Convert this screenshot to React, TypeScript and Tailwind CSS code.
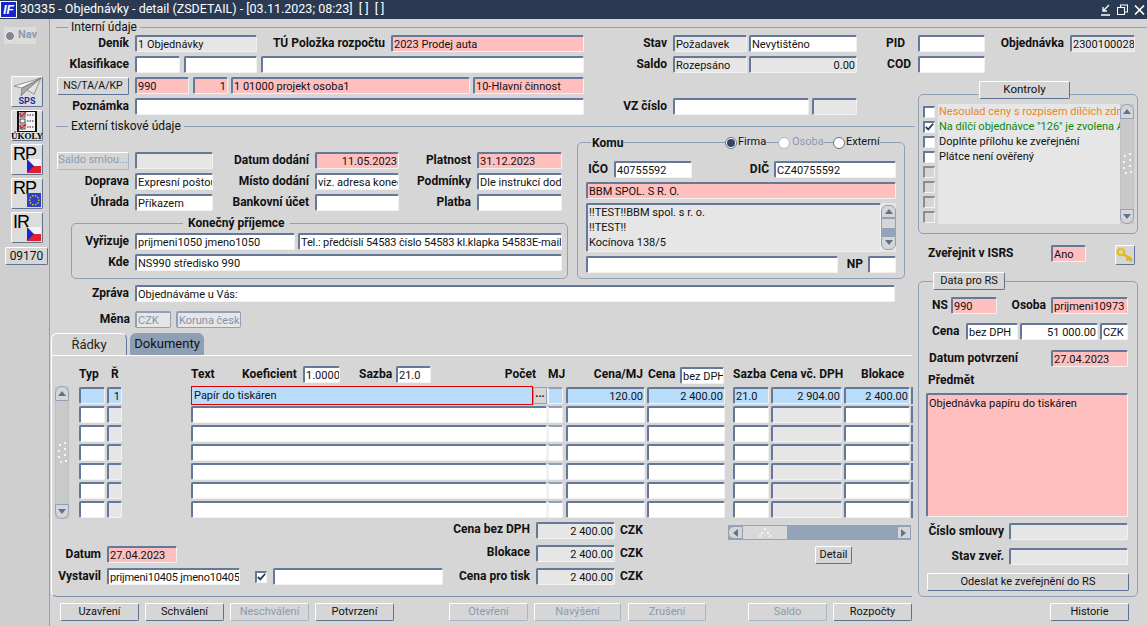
import type { ReactNode } from "react";

type Tone = "white" | "pink" | "gray" | "blue" | "off";

const TONES: Record<Tone, string> = {
  white: "bg-white",
  pink: "bg-[#ffbfbf]",
  gray: "bg-[#e6e6e6]",
  blue: "bg-[#b9dcfb]",
  off: "bg-[#e6e6e6] text-[#8194ad]",
};

function F({ c = "", t = "white", right, children }: { c?: string; t?: Tone; right?: boolean; children?: ReactNode }) {
  return (
    <div
      className={`h-[17px] shrink-0 overflow-hidden whitespace-nowrap rounded-[2px] border-t-2 border-l-2 border-r border-b border-t-[#64789a] border-l-[#64789a] border-r-[#f2f2f2] border-b-[#f2f2f2] px-[1px] leading-[15px] ${TONES[t]} ${right ? "text-right" : ""} ${c}`}
    >
      {children}
    </div>
  );
}

function Lbl({ c = "", left, children }: { c?: string; left?: boolean; children: ReactNode }) {
  return <div className={`shrink-0 whitespace-nowrap text-[12px] font-bold leading-[15px] text-[#111] ${left ? "text-left" : "text-right"} ${c}`}>{children}</div>;
}

function Btn({ c = "", off, children }: { c?: string; off?: boolean; children: ReactNode }) {
  return (
    <div
      className={`flex h-[18px] shrink-0 items-center justify-center whitespace-nowrap rounded-[2px] border border-t-white border-l-white bg-[#d6d6d6] ${off ? "border-r-[#a9b5c6] border-b-[#a9b5c6] text-[#8a9bb3]" : "border-r-[#5f7391] border-b-[#5f7391] text-[#111]"} ${c}`}
    >
      {children}
    </div>
  );
}

function Row({ c = "", children }: { c?: string; children: ReactNode }) {
  return <div className={`flex h-[17px] items-center ${c}`}>{children}</div>;
}

function Arrow({ dir }: { dir: "up" | "down" | "left" | "right" }) {
  const pts = { up: "4,1 8,6 0,6", down: "0,1 8,1 4,6", left: "6,0 6,8 1,4", right: "1,0 1,8 6,4" }[dir];
  return (
    <svg width="8" height="8" viewBox="0 0 8 8">
      <polygon points={pts} fill="#5f7391" />
    </svg>
  );
}

function Grip() {
  return (
    <svg width="10" height="22" viewBox="0 0 10 22">
      {[[2, 2], [7, 0], [1, 8], [7, 6], [1, 14], [7, 12], [3, 19], [8, 18]].map(([x, y]) => (
        <rect key={`${x}-${y}`} x={x} y={y} width="2" height="2" fill="#f4f4f4" />
      ))}
    </svg>
  );
}

function VScroll({ c = "" }: { c?: string }) {
  return (
    <div className={`flex w-[14px] shrink-0 flex-col bg-[#c9c9c9] ${c}`}>
      <div className="flex h-[15px] items-center justify-center rounded-t-[7px] border border-[#8fa0b8] bg-[#d6d6d6]">
        <Arrow dir="up" />
      </div>
      <div className="flex flex-1 items-center justify-center border-x border-[#c0c0c0]">
        <Grip />
      </div>
      <div className="flex h-[15px] items-center justify-center rounded-b-[7px] border border-[#8fa0b8] bg-[#d6d6d6]">
        <Arrow dir="down" />
      </div>
    </div>
  );
}

function Radio({ on, off }: { on?: boolean; off?: boolean }) {
  return (
    <div className={`flex h-[12px] w-[12px] shrink-0 items-center justify-center rounded-full border bg-white ${off ? "border-[#a9b5c6]" : "border-[#5f7391]"}`}>
      {on && <div className="h-[8px] w-[8px] rounded-full bg-[#334660]" />}
    </div>
  );
}

function Check({ on, off, c = "" }: { on?: boolean; off?: boolean; c?: string }) {
  return (
    <div
      className={`flex h-[12px] w-[12px] shrink-0 items-center justify-center border-t-2 border-l-2 border-r border-b border-r-[#f2f2f2] border-b-[#f2f2f2] ${off ? "border-t-[#8d8d8d] border-l-[#8d8d8d] bg-[#d6d6d6]" : "border-t-[#64789a] border-l-[#64789a] bg-white"} ${c}`}
    >
      {on && (
        <svg width="11" height="10" viewBox="0 0 11 10">
          <path d="M1 5l3 3 6-7" fill="none" stroke="#2a3a52" strokeWidth="2.2" />
        </svg>
      )}
    </div>
  );
}

function Flag({ eu }: { eu?: boolean }) {
  if (eu) {
    const stars = Array.from({ length: 10 }, (_, i) => {
      const a = (i * Math.PI) / 5;
      return <rect key={i} x={6.5 + 4.6 * Math.cos(a)} y={6.5 + 4.6 * Math.sin(a)} width="1.4" height="1.4" fill="#f5d800" />;
    });
    return (
      <svg width="14" height="14" viewBox="0 0 14 14">
        <rect width="14" height="14" fill="#2d3fc4" />
        {stars}
      </svg>
    );
  }
  return (
    <svg width="14" height="14" viewBox="0 0 14 14">
      <rect width="14" height="7" fill="#f4f4f4" />
      <rect y="7" width="14" height="7" fill="#e0202a" />
      <polygon points="0,0 7,7 0,14" fill="#2323c8" />
    </svg>
  );
}

function RailFlag({ text, eu }: { text: string; eu?: boolean }) {
  return (
    <div className="relative ml-[11px] mt-[3px] h-[31px] w-[32px] rounded-[2px] border border-t-white border-l-white border-r-[#5f7391] border-b-[#5f7391] bg-[#dcdcdc]">
      <div className="pl-[1px] font-['Liberation_Sans',sans-serif] text-[18px] leading-[18px] tracking-[-1px] text-black">{text}</div>
      <div className="absolute bottom-[1px] right-[1px] flex">
        <Flag eu={eu} />
      </div>
    </div>
  );
}

function Rail() {
  return (
    <div className="w-[50px] shrink-0 border-r border-[#8fa0b8] bg-[#cfcfcf]">
      <div className="ml-[4px] mt-[8px] flex h-[17px] w-[32px] items-center gap-[3px] bg-[#dcdcdc] pl-[1px] text-[11px] font-bold text-[#8a9bb3]">
        <div className="h-[10px] w-[10px] shrink-0 rounded-full border border-[#f2f2f2] bg-[#7f868f]" />
        Nav
      </div>
      <div className="ml-[11px] mt-[32px] flex h-[31px] w-[32px] flex-col items-center rounded-[2px] border border-t-white border-l-white border-r-[#5f7391] border-b-[#5f7391] bg-[#dcdcdc]">
        <svg width="30" height="20" viewBox="0 0 30 20">
          <polygon points="29,1 2,9 10,11" fill="#f8f8f8" stroke="#707070" strokeWidth="0.7" />
          <polygon points="29,1 10,11 9,19 15,13" fill="#a9a9a9" stroke="#707070" strokeWidth="0.7" />
          <polygon points="29,1 15,13 22,17" fill="#e4e4e4" stroke="#707070" strokeWidth="0.7" />
        </svg>
        <div className="text-[9px] font-bold leading-[8px] text-[#1b2f9e]">SPS</div>
      </div>
      <div className="ml-[11px] mt-[3px] flex h-[31px] w-[32px] flex-col items-center rounded-[2px] border border-t-white border-l-white border-r-[#5f7391] border-b-[#5f7391] bg-[#dcdcdc]">
        <svg width="22" height="21" viewBox="0 0 22 21">
          <rect x="1" y="0" width="20" height="21" fill="#111" />
          <rect x="3" y="1" width="16" height="19" fill="#f4f4f4" />
          {[2, 8, 14].map((y) => (
            <g key={y}>
              <rect x="4" y={y} width="5" height="4" fill="#f4f4f4" stroke="#222" strokeWidth="0.8" />
              <path d={`M11 ${y + 2}h7`} stroke="#222" strokeWidth="1" strokeDasharray="1.5 1" />
            </g>
          ))}
          <path d="M4 3l2 2 4-4M4 15l2 2 4-4" fill="none" stroke="#d5121a" strokeWidth="1.3" />
        </svg>
        <div className="font-['Liberation_Serif',serif] text-[9px] font-bold leading-[8px] text-black">ÚKOLY</div>
      </div>
      <RailFlag text="RP" />
      <RailFlag text="RP" eu />
      <RailFlag text="IR" />
      <Btn c="ml-[5px] mt-[4px] w-[43px] text-[12px]">09170</Btn>
    </div>
  );
}

function TitleBar() {
  return (
    <div className="flex h-[19px] items-center bg-[#2a3a52] text-[12.5px] text-white">
      <div className="flex h-[17px] w-[17px] items-center justify-center border border-white bg-[#1726c9] font-['Liberation_Sans',sans-serif] text-[12px] font-bold italic leading-none">IF</div>
      <div className="ml-[3px] whitespace-pre">30335 - Objednávky - detail (ZSDETAIL) - [03.11.2023; 08:23]  [ ]  [ ]</div>
      <div className="ml-auto mr-[2px] flex items-center gap-[6px]">
        <svg width="11" height="12" viewBox="0 0 11 12">
          <path d="M1 11h9M9 1L3 7M3 3v4h4" fill="none" stroke="#fff" strokeWidth="1.3" />
        </svg>
        <svg width="11" height="12" viewBox="0 0 11 12">
          <path d="M3.5 3V1h7v7H8M.5 3.5h7v7h-7z" fill="none" stroke="#fff" strokeWidth="1.1" />
        </svg>
        <svg width="11" height="12" viewBox="0 0 11 12">
          <path d="M1 1.5l9 9M10 1.5l-9 9" fill="none" stroke="#fff" strokeWidth="1.7" />
        </svg>
      </div>
    </div>
  );
}

function TopFields() {
  return (
    <>
      <Row>
        <Lbl c="w-[79px]">Deník</Lbl>
        <F c="ml-[6px] w-[122px]" t="gray">1 Objednávky</F>
        <Lbl c="w-[128px]">TÚ Položka rozpočtu</Lbl>
        <F c="ml-[6px] w-[193px]" t="pink">2023 Prodej auta</F>
        <Lbl c="w-[83px]">Stav</Lbl>
        <F c="ml-[6px] w-[74px]" t="gray">Požadavek</F>
        <F c="ml-[2px] w-[108px]">Nevytištěno</F>
        <Lbl c="w-[48px]">PID</Lbl>
        <F c="ml-[13px] w-[67px]" />
        <Lbl c="w-[79px]">Objednávka</Lbl>
        <F c="ml-[6px] w-[65px]" t="gray">2300100028</F>
      </Row>
      <Row c="mt-[4px]">
        <Lbl c="w-[79px]">Klasifikace</Lbl>
        <F c="ml-[6px] w-[45px]" />
        <F c="ml-[4px] w-[73px]" />
        <F c="ml-[4px] w-[323px]" />
        <Lbl c="w-[83px]">Saldo</Lbl>
        <F c="ml-[6px] w-[74px]" t="gray">Rozepsáno</F>
        <F c="ml-[2px] w-[108px]" t="gray" right>0.00</F>
        <Lbl c="w-[54px]">COD</Lbl>
        <F c="ml-[7px] w-[67px]" />
      </Row>
    </>
  );
}

function Komu() {
  return (
    <div className="relative ml-[9px] h-[137px] w-[328px] rounded-[5px] border border-[#8fa0b8] pt-[18px]">
      <div className="absolute -top-[8px] left-[13px] flex h-[15px] items-center">
        <div className="w-[32px] bg-[#d6d6d6] pl-[1px] text-[12px] font-bold">Komu</div>
        <div className="ml-[102px] flex w-[39px] items-center gap-[1px] bg-[#d6d6d6]"><Radio on /><span>Firma</span></div>
        <div className="ml-[14px] flex w-[46px] items-center gap-[2px] bg-[#d6d6d6] text-[#8a9bb3]"><Radio off /><span>Osoba</span></div>
        <div className="ml-[9px] flex w-[47px] items-center gap-[1px] bg-[#d6d6d6]"><Radio /><span>Externí</span></div>
      </div>
      <Row>
        <Lbl c="w-[30px]">IČO</Lbl>
        <F c="ml-[6px] w-[78px]">40755592</F>
        <Lbl c="w-[77px]">DIČ</Lbl>
        <F c="ml-[5px] w-[122px]">CZ40755592</F>
      </Row>
      <F c="ml-[8px] mt-[4px] w-[310px]" t="pink">BBM SPOL. S R. O.</F>
      <div className="ml-[8px] mt-[4px] flex h-[49px] w-[310px]">
        <div className="w-[295px] rounded-[2px] border-t-2 border-l-2 border-r border-b border-t-[#64789a] border-l-[#64789a] border-r-[#f2f2f2] border-b-[#f2f2f2] bg-[#e6e6e6] px-[1px] leading-[15px]">
          <div>‼TEST‼BBM spol. s r. o.</div>
          <div>‼TEST‼</div>
          <div>Kocínova 138/5</div>
        </div>
        <div className="flex w-[15px] flex-col bg-[#e6e6e6] pt-[2px]">
          <div className="flex h-[13px] items-center justify-center rounded-t-[6px] border border-[#8fa0b8] bg-[#d6d6d6]"><Arrow dir="up" /></div>
          <div className="h-[11px] border border-[#8fa0b8] bg-[#d6d6d6]" />
          <div className="h-[7px] bg-[#93a3b8]" />
          <div className="flex h-[14px] items-center justify-center rounded-b-[6px] border border-[#8fa0b8] bg-[#d6d6d6]"><Arrow dir="down" /></div>
        </div>
      </div>
      <Row c="mt-[4px]">
        <F c="ml-[8px] w-[252px]" />
        <Lbl c="w-[25px]">NP</Lbl>
        <F c="ml-[5px] w-[28px]" />
      </Row>
    </div>
  );
}

function Externi() {
  return (
    <div className="mt-[11px] flex">
      <div className="w-[518px] pt-[10px]">
        <Row>
          <Btn c="ml-[7px] h-[17px] w-[72px] text-[11px]" off>Saldo smlou...</Btn>
          <F c="ml-[6px] w-[78px]" t="gray" />
          <Lbl c="w-[96px]">Datum dodání</Lbl>
          <F c="ml-[6px] w-[84px]" t="pink" right>11.05.2023</F>
          <Lbl c="w-[72px]">Platnost</Lbl>
          <F c="ml-[6px] w-[85px]" t="pink">31.12.2023</F>
        </Row>
        <Row c="mt-[4px]">
          <Lbl c="w-[79px]">Doprava</Lbl>
          <F c="ml-[6px] w-[78px]">Expresní poštou</F>
          <Lbl c="w-[96px]">Místo dodání</Lbl>
          <F c="ml-[6px] w-[84px]">viz. adresa konečného</F>
          <Lbl c="w-[72px]">Podmínky</Lbl>
          <F c="ml-[6px] w-[85px]">Dle instrukcí dodavatele</F>
        </Row>
        <Row c="mt-[4px]">
          <Lbl c="w-[79px]">Úhrada</Lbl>
          <F c="ml-[6px] w-[78px]">Příkazem</F>
          <Lbl c="w-[96px]">Bankovní účet</Lbl>
          <F c="ml-[6px] w-[84px]" />
          <Lbl c="w-[72px]">Platba</Lbl>
          <F c="ml-[6px] w-[85px]" />
        </Row>
        <div className="relative ml-[21px] mt-[12px] h-[56px] w-[497px] rounded-[5px] border border-[#8fa0b8] pt-[9px]">
          <div className="absolute -top-[8px] left-[111px] bg-[#d6d6d6] px-[5px] text-[12px] font-bold leading-[15px]">Konečný příjemce</div>
          <Row>
            <Lbl c="w-[57px]">Vyřizuje</Lbl>
            <F c="ml-[6px] w-[160px]">prijmeni1050 jmeno1050</F>
            <F c="ml-[3px] w-[264px] tracking-[-0.12px]">Tel.: předčíslí 54583 číslo 54583 kl.klapka 54583E-mail:</F>
          </Row>
          <Row c="mt-[4px]">
            <Lbl c="w-[57px]">Kde</Lbl>
            <F c="ml-[6px] w-[427px]">NS990 středisko 990</F>
          </Row>
        </div>
      </div>
      <Komu />
    </div>
  );
}

function GridRow({ first }: { first?: boolean }) {
  const t: Tone = first ? "blue" : "white";
  return (
    <div className="flex h-[17px] items-center">
      <F c="w-[26px]" t={t} />
      <F c="ml-[2px] w-[15px]" t={first ? "blue" : "gray"} right>{first ? "1" : ""}</F>
      {first ? (
        <>
          <div className="ml-[69px] h-[19px] w-[342px] overflow-hidden whitespace-nowrap border border-[#e00000] bg-[#b9dcfb] px-[2px] leading-[17px]">Papír do tiskáren</div>
          <div className="flex h-[17px] w-[14px] items-center justify-center border border-[#8fa0b8] bg-[#d6d6d6] pb-[4px] text-[11px] font-bold leading-none">...</div>
        </>
      ) : (
        <F c="ml-[69px] w-[356px]" />
      )}
      <F c="w-[16px] !border-l-[#f2f2f2] !border-t-[#8fa0b8]" t={t} />
      <F c="ml-[3px] w-[79px]" t={t} right>{first ? "120.00" : ""}</F>
      <F c="ml-[2px] w-[78px]" t={t} right>{first ? "2 400.00" : ""}</F>
      <F c="ml-[8px] w-[36px]" t={t}>{first ? "21.0" : ""}</F>
      <F c="ml-[2px] w-[71px]" t={first ? "blue" : "gray"} right>{first ? "2 904.00" : ""}</F>
      <F c="ml-[2px] w-[66px]" t={t} right>{first ? "2 400.00" : ""}</F>
      <div className="ml-[1px] h-[17px] w-[2px] bg-[#64789a]" />
    </div>
  );
}

function Radky() {
  return (
    <>
      <div className="flex h-[22px] pl-[1px]">
        <div className="flex w-[76px] items-center justify-center rounded-t-[6px] border-t border-l border-r border-t-white border-l-white border-r-[#64789a] text-[13px] text-[#222]">Řádky</div>
        <div className="ml-[3px] flex w-[74px] items-center justify-center rounded-t-[6px] bg-[#8e9fb5] text-[13px] text-[#111]">Dokumenty</div>
      </div>
      <div className="ml-[1px] h-[242px] w-[861px] rounded-bl-[6px] border-t border-l border-b border-t-white border-l-white border-b-[#7b8ea8]">
        <div className="mt-[9px] flex h-[19px] items-center">
          <Lbl c="ml-[27px] w-[26px]" left>Typ</Lbl>
          <Lbl c="ml-[6px] w-[10px]" left>Ř</Lbl>
          <Lbl c="ml-[70px] w-[51px]" left>Text</Lbl>
          <Lbl c="w-[55px]" left>Koeficient</Lbl>
          <F c="ml-[6px] w-[37px]">1.0000</F>
          <Lbl c="ml-[19px] w-[31px]" left>Sazba</Lbl>
          <F c="ml-[6px] w-[35px]">21.0</F>
          <Lbl c="w-[105px]">Počet</Lbl>
          <Lbl c="ml-[12px] w-[20px]" left>MJ</Lbl>
          <Lbl c="w-[75px]">Cena/MJ</Lbl>
          <Lbl c="ml-[5px] w-[32px]" left>Cena</Lbl>
          <F c="mt-[2px] w-[44px]">bez DPH</F>
          <Lbl c="ml-[9px] w-[31px]" left>Sazba</Lbl>
          <Lbl c="ml-[6px] w-[70px]" left>Cena vč. DPH</Lbl>
          <Lbl c="ml-[21px] w-[43px]" left>Blokace</Lbl>
        </div>
        <div className="mt-[3px] flex">
          <VScroll c="ml-[3px] -mt-[1px] h-[133px]" />
          <div className="ml-[10px] flex flex-col gap-[2px]">
            <GridRow first />
            {[1, 2, 3, 4, 5, 6].map((i) => (
              <GridRow key={i} />
            ))}
          </div>
        </div>
        <div className="mt-[3px] flex h-[17px] items-start">
          <Lbl c="w-[478px]">Cena bez DPH</Lbl>
          <F c="ml-[6px] w-[79px]" t="gray" right>2 400.00</F>
          <Lbl c="ml-[5px] mt-[1px] w-[22px]">CZK</Lbl>
          <div className="ml-[86px] mt-[3px] flex h-[15px] w-[183px] bg-[#93a3b8] py-[1px]">
            <div className="flex w-[15px] items-center justify-center rounded-l-[6px] border border-[#8fa0b8] bg-[#d6d6d6]"><Arrow dir="left" /></div>
            <div className="flex w-[44px] items-center justify-center bg-[#d9d9d9]">
              <svg width="14" height="9" viewBox="0 0 14 9">
                <rect x="6" y="0" width="2" height="2" fill="#f4f4f4" />
                <rect x="3" y="4" width="2" height="2" fill="#f4f4f4" />
                <rect x="9" y="4" width="2" height="2" fill="#f4f4f4" />
                <rect x="1" y="7" width="2" height="2" fill="#f4f4f4" />
                <rect x="11" y="7" width="2" height="2" fill="#f4f4f4" />
              </svg>
            </div>
            <div className="ml-auto flex w-[14px] items-center justify-center border border-[#8fa0b8] bg-[#d6d6d6]"><Arrow dir="right" /></div>
          </div>
        </div>
        <div className="mt-[6px] flex h-[18px] items-start">
          <Lbl c="mt-[2px] w-[49px]">Datum</Lbl>
          <F c="ml-[6px] mt-[1px] w-[70px]" t="pink">27.04.2023</F>
          <Lbl c="w-[353px]">Blokace</Lbl>
          <F c="ml-[6px] w-[79px]" t="gray" right>2 400.00</F>
          <Lbl c="ml-[5px] mt-[1px] w-[22px]">CZK</Lbl>
          <Btn c="ml-[173px] mt-[1px] w-[37px]">Detail</Btn>
        </div>
        <div className="mt-[5px] flex h-[17px] items-center">
          <Lbl c="w-[49px]">Vystavil</Lbl>
          <F c="ml-[6px] w-[133px] tracking-[-0.2px]">prijmeni10405 jmeno10405</F>
          <Check on c="ml-[15px]" />
          <F c="ml-[6px] w-[170px]" />
          <Lbl c="w-[87px]">Cena pro tisk</Lbl>
          <F c="ml-[6px] w-[79px]" t="gray" right>2 400.00</F>
          <Lbl c="ml-[5px] w-[22px]">CZK</Lbl>
        </div>
      </div>
      <div className="ml-[10px] mt-[6px] flex">
        <Btn c="w-[79px]">Uzavření</Btn>
        <Btn c="ml-[6px] w-[79px]">Schválení</Btn>
        <Btn c="ml-[6px] w-[79px]" off>Neschválení</Btn>
        <Btn c="ml-[6px] w-[79px]">Potvrzení</Btn>
        <Btn c="ml-[55px] w-[79px]" off>Otevření</Btn>
        <Btn c="ml-[6px] w-[87px]" off>Navýšení</Btn>
        <Btn c="ml-[7px] w-[78px]" off>Zrušení</Btn>
        <Btn c="ml-[42px] w-[79px]" off>Saldo</Btn>
        <Btn c="ml-[6px] w-[79px]">Rozpočty</Btn>
      </div>
    </>
  );
}

const KONTROLY: { text: string; color: string; on?: boolean }[] = [
  { text: "Nesoulad ceny s rozpisem dílčích zdrojů", color: "text-[#e8862a]" },
  { text: 'Na dílčí objednávce "126" je zvolena Akce', color: "text-[#0a8a0a]", on: true },
  { text: "Doplňte přílohu ke zveřejnění", color: "text-[#111]" },
  { text: "Plátce není ověřený", color: "text-[#111]" },
];

function RightColumn() {
  return (
    <div className="w-[232px] shrink-0">
      <div className="relative ml-[3px] mt-[17px] flex h-[140px] w-[220px] rounded-[5px] border border-[#8fa0b8] pt-[9px]">
        <Btn c="absolute -top-[14px] left-[60px] w-[91px] text-[11.5px]">Kontroly</Btn>
        <div className="flex w-[201px] flex-col">
          {[0, 1, 2, 3, 4, 5, 6, 7].map((i) => {
            const k = KONTROLY[i];
            return (
              <div key={i} className="flex h-[15px] items-center">
                <Check c="ml-[4px]" on={k?.on} off={!k} />
                <div className={`ml-[3px] h-[15px] w-[186px] overflow-hidden whitespace-nowrap bg-[#e6e6e6] pl-[1px] leading-[15px] ${k?.color ?? ""}`}>{k?.text}</div>
              </div>
            );
          })}
        </div>
        <VScroll c="h-[120px]" />
      </div>
      <div className="mt-[11px] flex h-[20px] items-start">
        <Lbl c="ml-[13px] mt-[1px] w-[123px]" left>Zveřejnit v ISRS</Lbl>
        <F c="w-[35px]" t="pink">Ano</F>
        <div className="ml-[29px] flex h-[20px] w-[20px] items-center justify-center rounded-[2px] border border-t-white border-l-white border-r-[#5f7391] border-b-[#5f7391]">
          <svg width="18" height="16" viewBox="0 0 18 16">
            <ellipse cx="5" cy="5" rx="3.4" ry="3" fill="none" stroke="#e8bf1e" strokeWidth="2.6" />
            <path d="M7.5 7.5L16 12.5M12 10.5l-1 3M15 12l-.8 2.5" fill="none" stroke="#e0b41a" strokeWidth="2.6" />
          </svg>
        </div>
      </div>
      <div className="relative ml-[3px] mt-[16px] h-[316px] w-[220px] rounded-[5px] border border-[#8fa0b8] pt-[15px]">
        <Btn c="absolute -top-[10px] left-[14px] w-[72px]">Data pro RS</Btn>
        <Row>
          <Lbl c="ml-[13px] w-[19px]" left>NS</Lbl>
          <F c="w-[46px]" t="pink">990</F>
          <Lbl c="w-[49px]">Osoba</Lbl>
          <F c="ml-[5px] w-[77px]" t="pink">prijmeni10973 jmeno</F>
        </Row>
        <Row c="mt-[9px]">
          <Lbl c="ml-[13px] w-[28px]" left>Cena</Lbl>
          <F c="ml-[6px] w-[52px]">bez DPH</F>
          <F c="ml-[2px] w-[78px]" right>51 000.00</F>
          <F c="ml-[2px] w-[28px]">CZK</F>
        </Row>
        <Row c="mt-[10px]">
          <Lbl c="ml-[10px] w-[122px]" left>Datum potvrzení</Lbl>
          <F c="w-[77px]" t="pink">27.04.2023</F>
        </Row>
        <div className="flex h-[26px] items-center pl-[9px] text-[12px] font-bold text-[#111]">Předmět</div>
        <div className="ml-[7px] h-[124px] w-[202px] rounded-[2px] border-t-2 border-l-2 border-r border-b border-t-[#64789a] border-l-[#64789a] border-r-[#f2f2f2] border-b-[#f2f2f2] bg-[#ffbfbf] px-[1px] pt-[1px] leading-[15px]">Objednávka papíru do tiskáren</div>
        <Row c="mt-[6px]">
          <Lbl c="w-[85px]">Číslo smlouvy</Lbl>
          <F c="ml-[5px] w-[119px]" t="gray" />
        </Row>
        <Row c="mt-[8px]">
          <Lbl c="w-[85px]">Stav zveř.</Lbl>
          <F c="ml-[5px] w-[119px]" t="gray" />
        </Row>
        <Btn c="ml-[8px] mt-[8px] w-[202px]">Odeslat ke zveřejnění do RS</Btn>
      </div>
      <Btn c="ml-[135px] mt-[6px] w-[79px]">Historie</Btn>
    </div>
  );
}

export default function App() {
  return (
    <div className="h-[626px] w-[1147px] overflow-hidden bg-[#d6d6d6] font-['Roboto',sans-serif] text-[11px] text-[#111]">
      <TitleBar />
      <div className="flex h-[607px]">
        <Rail />
        <div className="flex-1">
          <div className="flex h-[16px] items-center pl-[6px]">
            <div className="h-px w-[12px] bg-[#8fa0b8]" />
            <div className="ml-[3px] text-[12px] leading-[15px]">Interní údaje</div>
            <div className="ml-[3px] h-px flex-1 bg-[#8fa0b8]" />
          </div>
          <TopFields />
          <div className="mt-[4px] flex">
            <div className="w-[865px] shrink-0">
              <Row>
                <Btn c="ml-[7px] h-[17px] w-[72px] text-[10.5px]">NS/TA/A/KP</Btn>
                <F c="ml-[6px] w-[54px]" t="pink">990</F>
                <F c="ml-[4px] w-[35px]" t="pink" right>1</F>
                <F c="ml-[3px] w-[239px]" t="pink">1 01000 projekt osoba1</F>
                <F c="ml-[3px] w-[111px]" t="pink">10-Hlavní činnost</F>
              </Row>
              <Row c="mt-[4px]">
                <Lbl c="w-[79px]">Poznámka</Lbl>
                <F c="ml-[6px] w-[449px]" />
                <Lbl c="w-[83px]">VZ číslo</Lbl>
                <F c="ml-[6px] w-[136px]" />
                <F c="ml-[3px] w-[45px]" t="gray" />
              </Row>
              <div className="mt-[6px] flex h-[10px] items-center pl-[6px]">
                <div className="h-px w-[12px] bg-[#8fa0b8]" />
                <div className="ml-[3px] text-[12px] leading-[15px]">Externí tiskové údaje</div>
                <div className="ml-[3px] h-px flex-1 bg-[#8fa0b8]" />
              </div>
              <Externi />
              <Row c="mt-[6px]">
                <Lbl c="w-[79px]">Zpráva</Lbl>
                <F c="ml-[6px] w-[760px]">Objednáváme u Vás:</F>
              </Row>
              <Row c="mt-[9px]">
                <Lbl c="w-[80px]">Měna</Lbl>
                <F c="ml-[5px] w-[36px] !border-[#8fa0b8]" t="off">CZK</F>
                <F c="ml-[5px] w-[65px] !border-[#8fa0b8]" t="off">Koruna česká</F>
              </Row>
              <div className="mt-[5px]">
                <Radky />
              </div>
            </div>
            <RightColumn />
          </div>
        </div>
      </div>
    </div>
  );
}
